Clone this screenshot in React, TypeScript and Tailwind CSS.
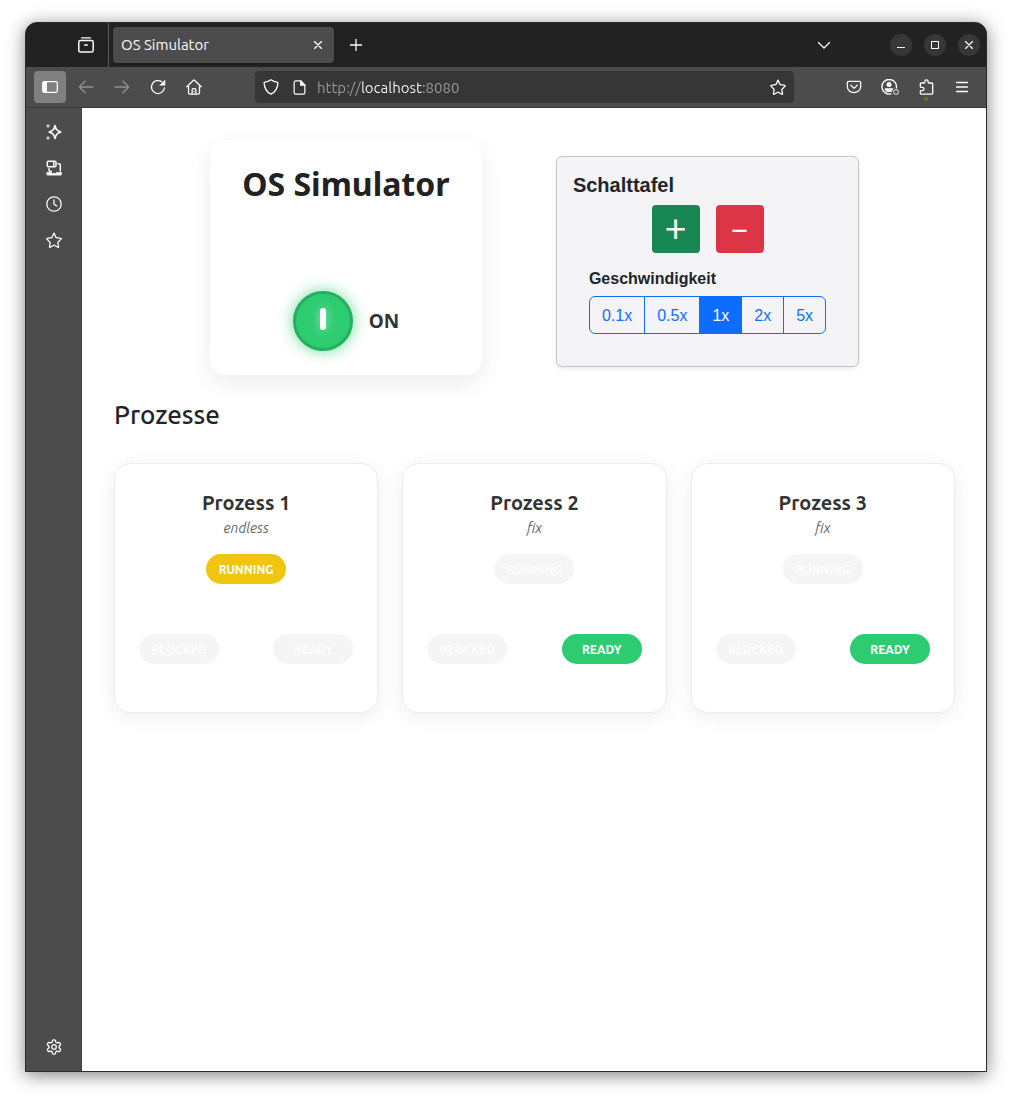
import { useState } from "react";
import type { ReactNode } from "react";

const uiFont = "font-['Ubuntu','Noto_Sans',sans-serif]";

function Icon({ children, size = 16 }: { children: ReactNode; size?: number }) {
  return (
    <svg
      width={size}
      height={size}
      viewBox="0 0 16 16"
      fill="none"
      stroke="currentColor"
      strokeWidth="1.3"
      strokeLinecap="round"
      strokeLinejoin="round"
      aria-hidden="true"
    >
      {children}
    </svg>
  );
}

const starPath =
  "M8 1.1 10 5.4a.6.6 0 0 0 .5.3l4.3.6a.5.5 0 0 1 .3.8L12 10.2a.6.6 0 0 0-.2.5l.8 4.1a.5.5 0 0 1-.7.5L8.3 13.3a.6.6 0 0 0-.6 0l-3.6 2a.5.5 0 0 1-.7-.5l.8-4.1a.6.6 0 0 0-.2-.5L.9 7.1a.5.5 0 0 1 .3-.8l4.3-.6A.6.6 0 0 0 6 5.4Z";

function ToolButton({ label, className = "", children }: { label: string; className?: string; children: ReactNode }) {
  return (
    <button
      type="button"
      aria-label={label}
      className={`flex size-8 shrink-0 items-center justify-center rounded text-[#fbfbfe] ${className}`}
    >
      {children}
    </button>
  );
}

function TabBar() {
  return (
    <div className="flex h-11 items-center bg-[#222222] pr-1.5">
      <div className="flex h-full w-[83px] items-center justify-end border-r border-[#5a5a5a] pr-1.5">
        <ToolButton label="Recent windows">
          <Icon>
            <path d="M3.5 .8h9" />
            <path d="M.8 5.2c0-1 .6-1.6 1.6-1.6h11.2c1 0 1.600.6 1.600 1.600v8.200c0 1-.6 1.600-1.600 1.600H2.400c-1 0-1.600-.6-1.600-1.600Z" strokeWidth="1.500" />
            <path d="M6.600 8h2.800" />
          </Icon>
        </ToolButton>
      </div>
      <div className="ml-1 flex h-9 w-[221px] items-center justify-between rounded bg-[#4c4c4c] pr-1 pl-2 shadow-sm">
        <span className="text-[15px] text-[#fbfbfe]">OS Simulator</span>
        <button type="button" aria-label="Close tab" className="flex size-6 items-center justify-center text-[#fbfbfe]">
          <Icon size={8}>
            <path d="m1 1 14 14M15 1 1 15" strokeWidth="2.8" />
          </Icon>
        </button>
      </div>
      <ToolButton label="New tab" className="ml-1.5">
        <Icon size={12}>
          <path d="M8 0v16M0 8h16" strokeWidth="1.7" />
        </Icon>
      </ToolButton>
      <div className="ml-auto flex items-center">
        <ToolButton label="List all tabs" className="mr-[50px]">
          <Icon size={12}>
            <path d="M.5 4.500 8 12l7.500-7.500" strokeWidth="1.700" />
          </Icon>
        </ToolButton>
        <div className="flex gap-3 text-white">
          <button type="button" aria-label="Minimize" className="flex size-[22px] items-center justify-center rounded-full bg-[#373737]">
            <Icon size={8}>
              <path d="M0 13h16" strokeWidth="2" strokeLinecap="butt" />
            </Icon>
          </button>
          <button type="button" aria-label="Maximize" className="flex size-[22px] items-center justify-center rounded-full bg-[#373737]">
            <span className="size-2 border border-white" />
          </button>
          <button type="button" aria-label="Close window" className="flex size-[22px] items-center justify-center rounded-full bg-[#373737]">
            <Icon size={8}>
              <path d="m1 1 14 14M15 1 1 15" strokeWidth="2.400" />
            </Icon>
          </button>
        </div>
      </div>
    </div>
  );
}

function NavBar() {
  const [url, setUrl] = useState("http://localhost:8080");
  return (
    <div className="flex h-[41px] items-center border-b border-[#3a3a3a] bg-[#4c4c4c] px-2">
      <ToolButton label="Toggle sidebar" className="bg-[#808080]">
        <Icon>
          <rect x=".7" y="2.700" width="14.600" height="10.600" rx="1.500" />
          <path d="M1 3h4v10H1Z" fill="currentColor" stroke="none" />
        </Icon>
      </ToolButton>
      <div className="ml-1 flex gap-1">
        <ToolButton label="Back" className="text-[#8f8f90]!">
          <Icon>
            <path d="M15 8H1.500M7 2.300 1.300 8 7 13.700" />
          </Icon>
        </ToolButton>
        <ToolButton label="Forward" className="text-[#8f8f90]!">
          <Icon>
            <path d="M1 8h13.500M9 2.300 14.700 8 9 13.700" />
          </Icon>
        </ToolButton>
        <ToolButton label="Reload">
          <Icon>
            <path d="M11.800 2.800A6.500 6.500 0 1 0 14.400 9" />
            <path d="M15 1.400v4.800h-4.900Z" fill="currentColor" strokeWidth=".6" />
          </Icon>
        </ToolButton>
        <ToolButton label="Home">
          <Icon>
            <path d="M.8 7.800 7.500 1.200a.7.700 0 0 1 1 0l6.700 6.600M2.500 6.500v7.300c0 .9.500 1.400 1.400 1.400h8.200c.9 0 1.400-.5 1.400-1.400V6.500" />
            <path d="M6.100 15v-4c0-.9.400-1.400 1.200-1.400h1.400c.8 0 1.200.5 1.200 1.400v4M8 12.500v.1" />
          </Icon>
        </ToolButton>
      </div>
      <div className="ml-[45px] flex h-8 min-w-0 flex-1 items-center rounded bg-[#363636]">
        <ToolButton label="Tracking protection">
          <Icon>
            <path d="M8 .8c1.900 1.400 4 2.100 6.200 2.300.4 0 .7.400.7.800C14.600 9 12.400 13.200 8 15.200 3.600 13.200 1.400 9 1.100 3.900c0-.4.300-.8.700-.8C4 2.900 6.100 2.200 8 .8Z" />
          </Icon>
        </ToolButton>
        <ToolButton label="Site information" className="w-6!">
          <Icon size={15}>
            <path d="M9.300 1H4C2.900 1 2.300 1.600 2.300 2.700v10.600C2.300 14.400 2.900 15 4 15h8c1.100 0 1.700-.6 1.700-1.700V5.500Z" />
            <path d="M9.300 1v4.500h4.400Z" fill="currentColor" />
          </Icon>
        </ToolButton>
        <input
          type="text"
          aria-label="Address"
          value={url}
          onChange={(event) => setUrl(event.target.value)}
          className="ml-1.5 h-8 min-w-0 flex-1 bg-[linear-gradient(90deg,#9a9a9b_45px,#fbfbfe_45px,#fbfbfe_106px,#9a9a9b_106px)] bg-clip-text text-[15px] text-transparent caret-white outline-none"
        />
        <ToolButton label="Bookmark this page">
          <Icon>
            <path d={starPath} />
          </Icon>
        </ToolButton>
      </div>
      <div className="ml-11 flex gap-1">
        <ToolButton label="Save to Pocket">
          <Icon>
            <path d="M2.800 2.300h10.400c1 0 1.500.6 1.500 1.500v3.700c0 8.200-13.400 8.200-13.400 0V3.800c0-.9.500-1.500 1.500-1.500Z" />
            <path d="M4.800 6.300 8 9.400l3.200-3.100" />
          </Icon>
        </ToolButton>
        <ToolButton label="Account">
          <svg width="20" height="16" viewBox="-1 0 20 16" fill="none" stroke="currentColor" strokeWidth="1.400" aria-hidden="true">
            <path d="M10.500 14.700A7.300 7.300 0 1 1 15.300 9.500" />
            <circle cx="8" cy="5.600" r="2.500" fill="currentColor" stroke="none" />
            <path d="M3.700 9.200h8.600c0 1-.9 1.600-1.100 2.500-.2.900-.4 1.400-1.400 1.400H6.300c-1.400-.2-2.400-2-2.600-3.900Z" fill="currentColor" stroke="none" />
            <circle cx="15" cy="13" r="2.400" stroke="#bdbdbd" strokeWidth="1.200" />
          </svg>
        </ToolButton>
        <ToolButton label="Extensions" className="relative">
          <Icon>
            <path d="M2.300 6.300V5c0-.6.400-1 1-1h2.900c.5 0 .7-.4.700-.9v-.6a1.600 1.600 0 0 1 3.200 0v.6c0 .5.200.9.700.9h2.900c.6 0 1 .4 1 1v9.200c0 .6-.4 1-1 1H3.300c-.6 0-1-.4-1-1v-1.700c0-.6.300-.8.800-.8h1.200a1.700 1.700 0 0 0 0-3.400h-1.200c-.5 0-.8-.4-.8-1Z" />
          </Icon>
          <span className="absolute bottom-0.5 left-3.5 size-1 rounded-full bg-[#4d8a00]" />
        </ToolButton>
        <ToolButton label="Menu">
          <Icon>
            <path d="M2.500 3.500h11M2.500 8h11M2.500 12.500h11" />
          </Icon>
        </ToolButton>
      </div>
    </div>
  );
}

function Sidebar() {
  return (
    <nav aria-label="Sidebar" className="flex w-14 shrink-0 flex-col items-center gap-1 border-r border-[#404040] bg-[#4c4c4c] pt-2 pb-2">
      <ToolButton label="AI chatbot">
        <Icon>
          <path d="M9 1.500c.9 4 2 5.300 5.800 6.500-3.800 1.200-4.900 2.500-5.800 6.500C8.100 10.500 7 9.200 3.200 8 7 6.800 8.100 5.500 9 1.500Z" strokeWidth="1.700" />
          <circle cx="2" cy="2" r="1.700" fill="#c4c4c4" stroke="none" />
          <circle cx="2" cy="14" r="1.700" fill="#c4c4c4" stroke="none" />
        </Icon>
      </ToolButton>
      <ToolButton label="Synced tabs">
        <Icon>
          <rect x="1.300" y="1.300" width="8.700" height="5.400" rx="1" strokeWidth="1.500" />
          <path d="M7.800 1.500v5" strokeWidth="1.500" />
          <path d="M12 3.800h1c.8 0 1.300.5 1.300 1.300v6M3 8.700v1.500c0 .7.500 1.100 1.200 1.100h1" strokeWidth="1.500" />
          <path d="M1 12.600h4.500l1 .8h3l1-.8h5.100l-.5 2.500H1.500Z" fill="currentColor" strokeWidth=".8" />
        </Icon>
      </ToolButton>
      <ToolButton label="History">
        <Icon>
          <circle cx="8" cy="8" r="7.200" />
          <path d="M8 3.800v4.500l2.700 1.600" />
        </Icon>
      </ToolButton>
      <ToolButton label="Bookmarks">
        <Icon>
          <path d={starPath} />
        </Icon>
      </ToolButton>
      <ToolButton label="Customize sidebar" className="mt-auto">
        <Icon>
          <path d="M6.600 1.500c.2-.5.500-.7.900-.7h1c.4 0 .7.200.9.700l.5 1.700 1.200.7 1.700-.4c.5-.1.900 0 1.100.4l.6.900c.2.400.2.800-.2 1.200L13.100 7.300v1.400l1.200 1.300c.4.400.4.800.2 1.200l-.6.900c-.2.400-.6.500-1.100.4l-1.700-.4-1.200.7-.5 1.700c-.2.500-.5.700-.9.700h-1c-.4 0-.7-.2-.9-.7l-.5-1.700-1.200-.7-1.700.4c-.5.100-.9 0-1.100-.4l-.6-.9c-.2-.4-.2-.8.2-1.200l1.200-1.300V7.300L1.700 6c-.4-.4-.4-.8-.2-1.200l.6-.9c.2-.4.600-.5 1.100-.4l1.700.4 1.200-.7Z" />
          <circle cx="8" cy="8" r="2.300" />
        </Icon>
      </ToolButton>
    </nav>
  );
}

function PowerCard() {
  const [on, setOn] = useState(true);
  return (
    <section className="mb-2 flex w-[272px] flex-col items-center justify-between rounded-2xl bg-white px-6 pt-5 pb-6 font-['Noto_Sans',sans-serif] shadow-[0_8px_24px_rgba(0,0,0,0.08)]">
      <h1 className="text-[32px] leading-12 font-bold whitespace-nowrap text-[#222222]">OS Simulator</h1>
      <div className="flex items-center gap-4">
        <button
          type="button"
          aria-label="Power"
          aria-pressed={on}
          onClick={() => setOn(!on)}
          className="flex size-[60px] items-center justify-center rounded-full border-3 border-[#27ae60] bg-[#2ecc71] pb-1 shadow-[0_0_15px_rgba(46,204,113,0.7)]"
        >
          <span className="h-[22px] w-1.5 rounded-full bg-white shadow-[0_0_10px_rgba(255,255,255,0.5)]" />
        </button>
        <span className="text-[19px] leading-7 font-bold text-[#333333]">{on ? "ON" : "OFF"}</span>
      </div>
    </section>
  );
}

const speeds = ["0.1x", "0.5x", "1x", "2x", "5x"];

function ControlPanel() {
  const [speed, setSpeed] = useState("1x");
  return (
    <section className="my-4 rounded-md border border-[#c4c5c8] bg-[#f4f4f7] p-4 font-['Liberation_Sans',Arial,sans-serif] text-[#212529] shadow-[0_2px_4px_rgba(0,0,0,0.08)]">
      <h2 className="text-xl leading-6 font-bold">Schalttafel</h2>
      <div className="mt-2 flex justify-center gap-4 font-['Ubuntu','Noto_Sans',sans-serif] leading-10 text-white">
        <button type="button" aria-label="Add process" className="flex size-12 items-center justify-center rounded bg-[#198754] pb-1 text-[40px]">
          +
        </button>
        <button type="button" aria-label="Remove process" className="flex size-12 items-center justify-center rounded bg-[#dc3545] text-[28px] font-medium">
          –
        </button>
      </div>
      <div className="p-4 pt-3.5">
        <h3 id="speed-label" className="mb-1 text-base leading-6 font-bold">
          Geschwindigkeit
        </h3>
        <div role="group" aria-labelledby="speed-label" className="mt-[5px] flex">
          {speeds.map((value) => (
            <button
              key={value}
              type="button"
              aria-pressed={value === speed}
              onClick={() => setSpeed(value)}
              className={`-ml-px border border-[#0d6efd] px-3 pt-[7px] pb-[5px] text-base leading-6 first:ml-0 first:rounded-l-md last:rounded-r-md ${
                value === speed ? "bg-[#0d6efd] text-white" : "text-[#0d6efd]"
              }`}
            >
              {value}
            </button>
          ))}
        </div>
      </div>
    </section>
  );
}

type State = "RUNNING" | "BLOCKED" | "READY";

const stateColors: Record<State, string> = {
  RUNNING: "bg-[#f1c40f] text-white",
  BLOCKED: "bg-[#e74c3c] text-white",
  READY: "bg-[#2ecc71] text-white",
};

function StatePill({ state, current }: { state: State; current: State }) {
  return (
    <span
      className={`flex h-[30px] w-20 items-center justify-center rounded-full pt-0.5 text-xs font-semibold ${
        state === current ? stateColors[state] : "bg-[#f5f5f5] text-[#fdfdfd]"
      }`}
    >
      {state}
    </span>
  );
}

function ProcessCard({ name, kind, state }: { name: string; kind: string; state: State }) {
  return (
    <article className="flex flex-col items-center rounded-2xl border border-[#ececec] bg-white px-6 pt-6 pb-12 shadow-[0_4px_20px_rgba(0,0,0,0.07)]">
      <h3 className="text-xl leading-[30px] font-semibold text-[#333333]">{name}</h3>
      <p className="text-sm leading-5 text-[#666666] italic">{kind}</p>
      <div className="mt-4 flex w-full flex-col items-center gap-[50px]">
        <StatePill state="RUNNING" current={state} />
        <div className="flex w-full justify-between">
          <StatePill state="BLOCKED" current={state} />
          <StatePill state="READY" current={state} />
        </div>
      </div>
    </article>
  );
}

const processes: { name: string; kind: string; state: State }[] = [
  { name: "Prozess 1", kind: "endless", state: "RUNNING" },
  { name: "Prozess 2", kind: "fix", state: "READY" },
  { name: "Prozess 3", kind: "fix", state: "READY" },
];

export default function App() {
  return (
    <div className={`flex min-h-screen bg-white px-[25px] pt-[22px] pb-7 ${uiFont}`}>
      <div className="flex min-w-0 flex-1 flex-col overflow-hidden rounded-t-xl border border-[#2b2b2b] bg-[#222222] shadow-[0_3px_18px_rgba(0,0,0,0.5)]">
        <TabBar />
        <NavBar />
        <div className="flex flex-1">
          <Sidebar />
          <main className="min-w-0 flex-1 bg-white pt-8 pr-[31px] pl-8">
            <div className="flex flex-wrap justify-center gap-[74px]">
              <PowerCard />
              <ControlPanel />
            </div>
            <h2 className="mt-3 text-[26px] leading-10 font-medium text-[#212529]">Prozesse</h2>
            <div className="mt-7 grid grid-cols-3 gap-6">
              {processes.map((process) => (
                <ProcessCard key={process.name} {...process} />
              ))}
            </div>
          </main>
        </div>
      </div>
    </div>
  );
}
